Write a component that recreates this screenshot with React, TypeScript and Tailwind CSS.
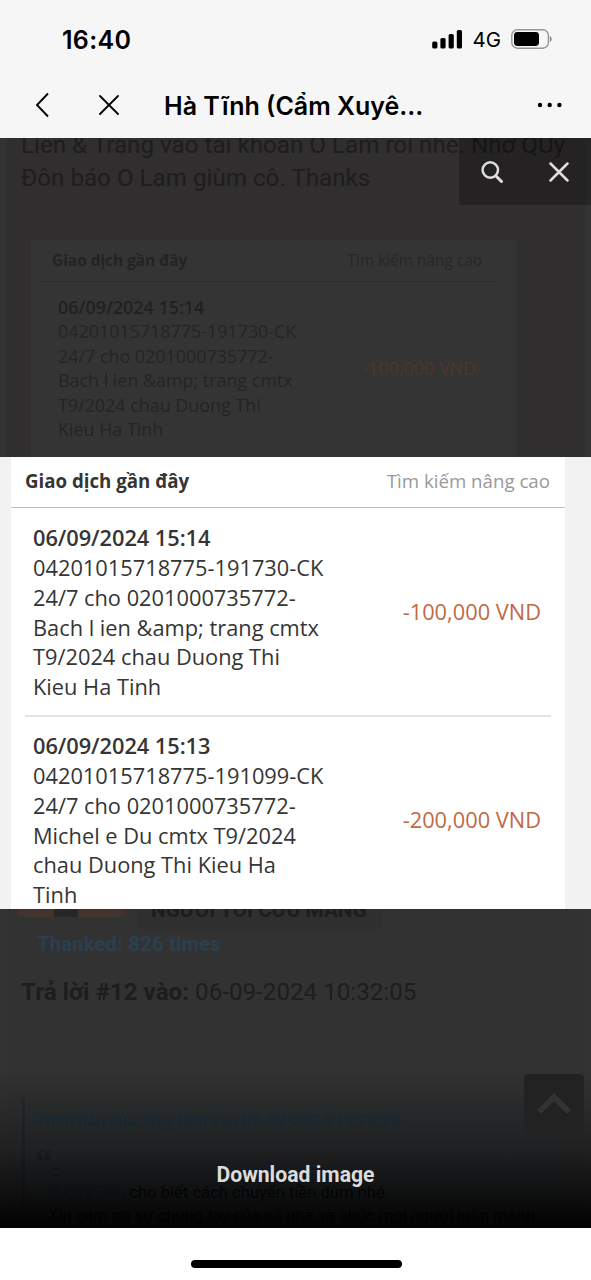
import React from 'react';

const transactions = [
  {
    date: '06/09/2024 15:14',
    lines: [
      '04201015718775-191730-CK',
      '24/7 cho 0201000735772-',
      'Bach l ien &amp; trang cmtx',
      'T9/2024 chau Duong Thi',
      'Kieu Ha Tinh',
    ],
    amount: '-100,000 VND',
  },
  {
    date: '06/09/2024 15:13',
    lines: [
      '04201015718775-191099-CK',
      '24/7 cho 0201000735772-',
      'Michel e Du cmtx T9/2024',
      'chau Duong Thi Kieu Ha',
      'Tinh',
    ],
    amount: '-200,000 VND',
  },
];

const StatusBar = () => (
  <div className="flex h-[78px] items-center justify-between pl-[62px] pr-[39px] pt-[2px]">
    <span className="text-[25px] font-semibold leading-none tracking-[0.3px]">16:40</span>
    <div className="flex items-center">
      <svg width="31" height="19" viewBox="0 0 31 19" className="mr-[9px] -mt-[1px]">
        <rect x="0.2" y="11.5" width="5.2" height="7" rx="1.6" />
        <rect x="8.4" y="8" width="5.2" height="10.5" rx="1.6" />
        <rect x="16.6" y="4" width="5.2" height="14.5" rx="1.6" />
        <rect x="24.8" y="0" width="5.2" height="18.5" rx="1.6" />
      </svg>
      <span className="mr-[10px] mt-[1px] text-[20.5px] leading-none">4G</span>
      <svg width="41" height="20" viewBox="0 0 41 20" className="-mt-[2px]">
        <rect x="0.8" y="0.8" width="36.6" height="18.4" rx="5.5" fill="none" stroke="#969696" strokeWidth="1.4" />
        <rect x="3" y="3" width="25" height="14" rx="3.4" />
        <path d="M38.8 7c2.6.8 2.6 5.2 0 6z" fill="#8e8e8e" />
      </svg>
    </div>
  </div>
);

const NavBar = () => (
  <div className="flex h-[60px] items-center">
    <svg width="14" height="26" viewBox="0 0 14 26" className="ml-[35px] -mt-[7px]" fill="none" stroke="black" strokeWidth="1.9">
      <path d="M13 1.5L2 13l11 11.5" />
    </svg>
    <svg width="20" height="20" viewBox="0 0 20 20" className="ml-[50px] -mt-[7px]" fill="none" stroke="black" strokeWidth="1.8" strokeLinecap="round">
      <path d="M1 1l18 18M19 1L1 19" />
    </svg>
    <h1 className="ml-[45px] mt-[-3px] w-[270px] whitespace-nowrap text-[25px] font-semibold leading-none">
      Hà Tĩnh (Cẩm Xuyê...
    </h1>
    <svg width="26" height="6" viewBox="0 0 26 6" className="ml-[103px] -mt-[7px]">
      <circle cx="3" cy="3" r="2.2" />
      <circle cx="12.7" cy="3" r="2.2" />
      <circle cx="22.4" cy="3" r="2.2" />
    </svg>
  </div>
);

// Forum post that stays visible through the dark backdrop
const DimmedPage = () => (
  <div className="flex h-full flex-col border-x-[6px] border-[#343334] bg-[#323232] font-[Roboto,sans-serif] text-[#1e1d1e]">
    <div className="h-[319px] shrink-0 overflow-hidden bg-[#302e2f]">
      <div className="-mt-[9px] h-[111px] whitespace-nowrap pl-[15px] text-[24.2px] leading-[32.5px]">
        <p>Liên &amp; Trang vào tài khoản O Lam rồi nhé. Nhờ QUý</p>
        <p>Đôn báo O Lam giùm cô. Thanks</p>
      </div>
      <div className="ml-[25px] h-[217px] w-[486px] bg-[#343434] pl-[10px] pr-[22px] font-['Open_Sans',sans-serif]">
        <div className="flex h-[42px] items-center justify-between border-b border-[#2d2d2d] pl-[11px] pr-[13px] text-[15.4px]">
          <span className="font-bold text-[#232323]">Giao dịch gần đây</span>
          <span className="text-[#272727]">Tìm kiếm nâng cao</span>
        </div>
        <div className="flex items-center justify-between pl-[17px] pr-[19px] pt-[13px] text-[17.9px] leading-[24.4px] text-[#242424]">
          <div className="whitespace-nowrap">
            <p className="font-semibold text-[#212121]">{transactions[0].date}</p>
            {transactions[0].lines.map((line) => (
              <p key={line}>{line}</p>
            ))}
          </div>
          <span className="text-[#4c372d]">{transactions[0].amount}</span>
        </div>
      </div>
    </div>

    <div className="h-[452px] shrink-0" />

    <div className="flex shrink-0 items-start pl-3">
      <div className="flex h-2 w-[107px] overflow-hidden rounded-b bg-[#40342c]">
        <div className="ml-9 w-6 bg-[#282726]" />
      </div>
      <div className="ml-3 h-5 w-[245px] overflow-hidden rounded-b-md bg-[#2f2f2f] pl-[14px]">
        <p className="-mt-[11px] whitespace-nowrap text-[20.8px] font-bold leading-[24px] text-[#1d1d1d]">NGƯỜI TÔI CƯU MANG</p>
      </div>
    </div>
    <p className="ml-[31px] mt-[3px] shrink-0 text-[20px] font-bold leading-6 tracking-[0.3px] text-[#2a4050]">Thanked: 826 times</p>
    <p className="ml-[15px] mt-5 shrink-0 text-[24.2px] leading-8">
      <b>Trả lời #12 vào:</b> 06-09-2024 10:32:05
    </p>
    <div className="ml-4 mr-4 mt-[90px] h-[130px] shrink-0 overflow-hidden whitespace-nowrap border-l-[3px] border-[#252b30] bg-[#2f3234] pl-[10px] pt-3">
      <p className="text-[16.5px] font-bold leading-[22px] text-[#1c3443]">
        Trích dẫn của: Quý Đôn vào 02-09-2024 11:26:26
      </p>
      <p className="mt-[12px] h-[20px] font-['Liberation_Serif',serif] text-[34px] font-bold leading-[34px] text-[#22282c]">“</p>
      <p className="ml-[14px] h-[17px] text-[14px] leading-[14px] text-[#181818]">.::.</p>
      <div className="ml-[13px] text-[16.6px] leading-[23px] text-[#0a0a0c]">
        <p><span className="text-[#13303f]">@Quý Đôn</span> cho biết cách chuyển tiền dùm nhé.</p>
        <p>Xin cám ơn sự chung tay của cả nhà và chúc mọi người luôn mạnh</p>
      </div>
    </div>
  </div>
);

const ReceiptImage = () => (
  <div className="h-[452px] overflow-hidden bg-[#f2f2f2] pl-[11px] pr-[26px] font-['Open_Sans',sans-serif] text-[#353535]">
    <div className="h-full bg-white">
      <div className="flex h-[51px] items-center justify-between border-b border-[#bdbdbd] pb-[2px] pl-[14px] pr-[15px] text-[18.7px]">
        <span className="font-bold">Giao dịch gần đây</span>
        <span className="text-[#999]">Tìm kiếm nâng cao</span>
      </div>
      {transactions.map((t, i) => (
        <div
          key={t.date}
          className={`mx-[14px] flex items-center justify-between pl-2 pr-[10px] text-[21.8px] leading-[29.8px] ${
            i === 0 ? 'h-[209px] border-b-2 border-[#e6e6e6] pt-[2px]' : 'h-[207px]'
          }`}
        >
          <div className="whitespace-nowrap">
            <p className="font-semibold tracking-[-0.05px]">{t.date}</p>
            {t.lines.map((line) => (
              <p key={line}>{line}</p>
            ))}
          </div>
          <span className="-mt-[1px] whitespace-nowrap text-[#c06a43]">{t.amount}</span>
        </div>
      ))}
    </div>
  </div>
);

const Lightbox = () => (
  <div className="absolute inset-0 flex flex-col">
    <div className="flex h-[319px] items-start justify-end">
      <div className="flex h-[67px] w-[132px] items-center justify-between bg-black/25 pl-[22px] pr-[22px]">
        <svg width="22" height="22" viewBox="0 0 22 22" fill="none" stroke="#dedede" strokeWidth="2.5" strokeLinecap="round">
          <circle cx="9.3" cy="9" r="7.7" />
          <path d="M15 15l5.5 5.5" strokeWidth="3" />
        </svg>
        <svg width="20" height="20" viewBox="0 0 20 20" fill="none" stroke="#dedede" strokeWidth="2.5" strokeLinecap="round">
          <path d="M1.5 1.5l17 17M18.5 1.5l-17 17" />
        </svg>
      </div>
    </div>
    <ReceiptImage />
    <div className="flex flex-1 flex-col justify-end">
      <div className="flex h-[160px] flex-col items-center bg-linear-to-b from-transparent via-black/35 via-50% to-black/95 pt-[95px]">
        <span className="font-[Roboto,sans-serif] text-[21.2px] font-bold leading-6 text-[#dcdcdc]">Download image</span>
      </div>
    </div>
  </div>
);

const App = () => {
  return (
    <div className="flex h-[1280px] w-[591px] flex-col overflow-hidden bg-white">
      <header className="h-[138px] bg-[#f6f6f6] font-[Inter,sans-serif] text-black">
        <StatusBar />
        <NavBar />
      </header>

      <main className="relative h-[1090px] overflow-hidden">
        <DimmedPage />
        <Lightbox />
        {/* Scroll to top */}
        <button className="absolute bottom-[94px] right-[7px] flex h-[60px] w-[60px] items-center justify-center rounded bg-[#222]">
          <svg width="34" height="22" viewBox="0 0 34 22" fill="none" stroke="#333" strokeWidth="5.5">
            <path d="M2 19L17 4l15 15" />
          </svg>
        </button>
      </main>

      <footer className="flex h-[52px] justify-center bg-white pt-8 pl-[2px]">
        <div className="h-2 w-[211px] rounded-full bg-black" />
      </footer>
    </div>
  );
};

export default App;
